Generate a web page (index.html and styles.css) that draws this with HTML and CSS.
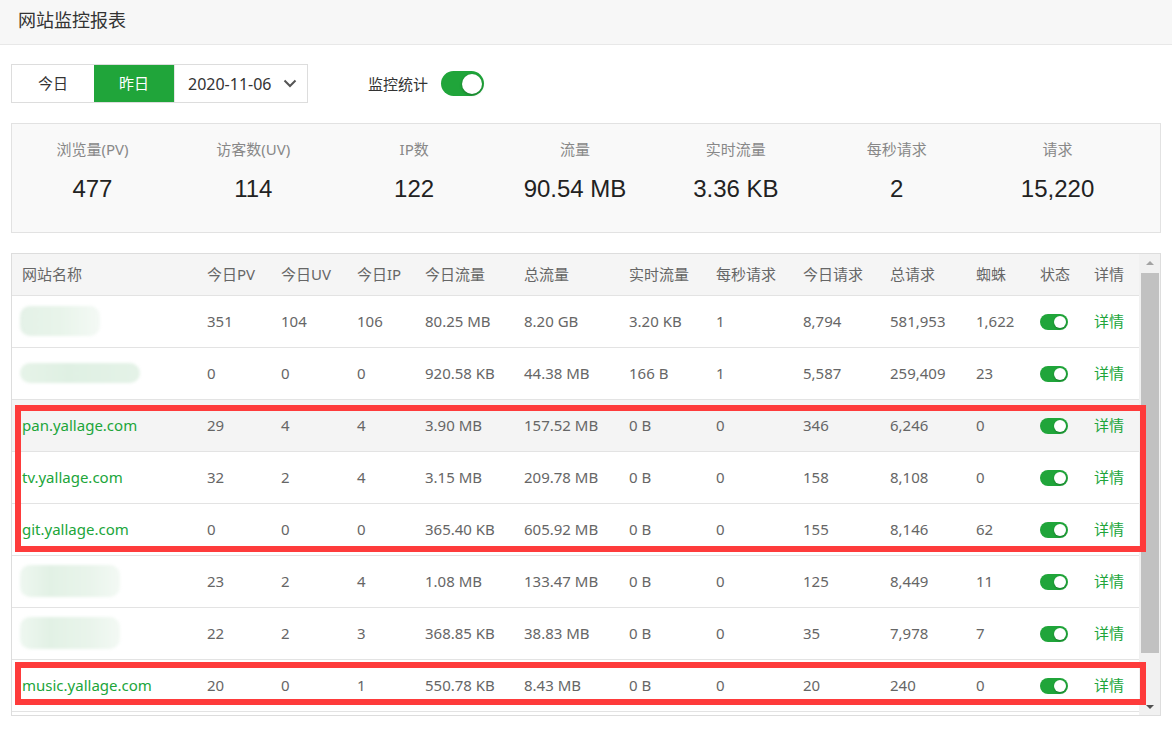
FILE: index.html
```html
<!DOCTYPE html>
<html lang="zh-CN">
<head>
<meta charset="utf-8">
<title>网站监控报表</title>
<link rel="stylesheet" href="styles.css">
</head>
<body>
<div class="page">
  <div class="header">网站监控报表</div>

  <div class="toolbar">
    <div class="seg">
      <div class="seg-btn">今日</div>
      <div class="seg-btn active">昨日</div>
      <div class="date">
        <span>2020-11-06</span>
        <svg class="chev" width="14" height="9" viewBox="0 0 14 9"><path d="M1.5 1.5 L7 7 L12.5 1.5" fill="none" stroke="#555" stroke-width="2"/></svg>
      </div>
    </div>
    <span class="mon-label">监控统计</span>
    <span class="switch big"><span class="knob"></span></span>
  </div>

  <div class="stats">
    <div class="stat"><div class="st-label">浏览量(PV)</div><div class="st-val">477</div></div>
    <div class="stat"><div class="st-label">访客数(UV)</div><div class="st-val">114</div></div>
    <div class="stat"><div class="st-label">IP数</div><div class="st-val">122</div></div>
    <div class="stat"><div class="st-label">流量</div><div class="st-val">90.54 MB</div></div>
    <div class="stat"><div class="st-label">实时流量</div><div class="st-val">3.36 KB</div></div>
    <div class="stat"><div class="st-label">每秒请求</div><div class="st-val">2</div></div>
    <div class="stat"><div class="st-label">请求</div><div class="st-val">15,220</div></div>
  </div>

  <div class="tbox">
    <div class="tscroll">
      <table class="grid">
        <colgroup>
          <col class="c1"><col class="c2"><col class="c3"><col class="c4"><col class="c5"><col class="c6"><col class="c7"><col class="c8"><col class="c9"><col class="c10"><col class="c11"><col class="c12"><col class="c13">
        </colgroup>
        <thead>
          <tr><th>网站名称</th><th>今日PV</th><th>今日UV</th><th>今日IP</th><th>今日流量</th><th>总流量</th><th>实时流量</th><th>每秒请求</th><th>今日请求</th><th>总请求</th><th>蜘蛛</th><th>状态</th><th>详情</th></tr>
        </thead>
        <tbody>
          <tr><td><span class="blur b1"></span></td><td>351</td><td>104</td><td>106</td><td>80.25 MB</td><td>8.20 GB</td><td>3.20 KB</td><td>1</td><td>8,794</td><td>581,953</td><td>1,622</td><td><span class="switch"><span class="knob"></span></span></td><td><a class="lnk">详情</a></td></tr>
          <tr><td><span class="blur b2"></span></td><td>0</td><td>0</td><td>0</td><td>920.58 KB</td><td>44.38 MB</td><td>166 B</td><td>1</td><td>5,587</td><td>259,409</td><td>23</td><td><span class="switch"><span class="knob"></span></span></td><td><a class="lnk">详情</a></td></tr>
          <tr class="hover"><td><a class="lnk">pan.yallage.com</a></td><td>29</td><td>4</td><td>4</td><td>3.90 MB</td><td>157.52 MB</td><td>0 B</td><td>0</td><td>346</td><td>6,246</td><td>0</td><td><span class="switch"><span class="knob"></span></span></td><td><a class="lnk">详情</a></td></tr>
          <tr><td><a class="lnk">tv.yallage.com</a></td><td>32</td><td>2</td><td>4</td><td>3.15 MB</td><td>209.78 MB</td><td>0 B</td><td>0</td><td>158</td><td>8,108</td><td>0</td><td><span class="switch"><span class="knob"></span></span></td><td><a class="lnk">详情</a></td></tr>
          <tr><td><a class="lnk">git.yallage.com</a></td><td>0</td><td>0</td><td>0</td><td>365.40 KB</td><td>605.92 MB</td><td>0 B</td><td>0</td><td>155</td><td>8,146</td><td>62</td><td><span class="switch"><span class="knob"></span></span></td><td><a class="lnk">详情</a></td></tr>
          <tr><td><span class="blur b3"></span></td><td>23</td><td>2</td><td>4</td><td>1.08 MB</td><td>133.47 MB</td><td>0 B</td><td>0</td><td>125</td><td>8,449</td><td>11</td><td><span class="switch"><span class="knob"></span></span></td><td><a class="lnk">详情</a></td></tr>
          <tr><td><span class="blur b3"></span></td><td>22</td><td>2</td><td>3</td><td>368.85 KB</td><td>38.83 MB</td><td>0 B</td><td>0</td><td>35</td><td>7,978</td><td>7</td><td><span class="switch"><span class="knob"></span></span></td><td><a class="lnk">详情</a></td></tr>
          <tr><td><a class="lnk">music.yallage.com</a></td><td>20</td><td>0</td><td>1</td><td>550.78 KB</td><td>8.43 MB</td><td>0 B</td><td>0</td><td>20</td><td>240</td><td>0</td><td><span class="switch"><span class="knob"></span></span></td><td><a class="lnk">详情</a></td></tr>
        </tbody>
      </table>
    </div>
    <div class="sbar">
      <div class="sb-btn"><span class="tri up"></span></div>
      <div class="sb-track"><div class="sb-thumb"></div></div>
      <div class="sb-btn"><span class="tri down"></span></div>
    </div>
    <div class="mark m1"></div>
    <div class="mark m2"></div>
  </div>
</div>
</body>
</html>
```
FILE: styles.css
```css
html, body {
  margin: 0;
  padding: 0;
  background: #fff;
}
body {
  font-family: "Noto Sans", "Noto Sans CJK SC", sans-serif;
  font-size: 15px;
  color: #333;
}
.page {
  width: 1172px;
}
.header {
  height: 44px;
  line-height: 41px;
  padding-left: 18px;
  font-size: 18px;
  color: #333;
  background: #f7f7f7;
  border-bottom: 1px solid #e8e8e8;
}
.toolbar {
  display: flex;
  align-items: center;
  margin: 19px 0 0 11px;
  height: 39px;
}
.seg {
  display: flex;
  height: 37px;
  border: 1px solid #ddd;
}
.seg-btn {
  width: 82px;
  line-height: 37px;
  text-align: center;
  color: #333;
  background: #fff;
}
.seg-btn.active {
  width: 80px;
  background: #20a53a;
  color: #fff;
}
.date {
  width: 133px;
  box-sizing: border-box;
  padding: 0 10px 0 13px;
  display: flex;
  align-items: center;
  justify-content: space-between;
  color: #333;
  font-size: 16px;
  border-left: 1px solid #e5e5e5;
}
.chev {
  display: block;
}
.mon-label {
  margin-left: 60px;
  color: #333;
}
.switch {
  display: inline-block;
  position: relative;
  width: 28px;
  height: 16px;
  border-radius: 8px;
  background: #20a53a;
  vertical-align: middle;
}
.switch .knob {
  position: absolute;
  right: 2px;
  top: 2px;
  width: 12px;
  height: 12px;
  border-radius: 50%;
  background: #fff;
  box-shadow: 0 1px 2px rgba(0,0,0,0.25);
}
.switch.big {
  width: 43px;
  height: 25px;
  border-radius: 13px;
  margin-left: 13px;
}
.switch.big .knob {
  width: 20px;
  height: 20px;
  top: 2.5px;
  right: 2px;
  box-shadow: 0 1px 3px rgba(0,0,0,0.3);
}
.stats {
  margin: 20px 11px 0 11px;
  height: 108px;
  border: 1px solid #e2e2e2;
  background: #f9f9f9;
  display: grid;
  grid-template-columns: repeat(7, 1fr);
  padding: 0 22px 0 0;
}
.stat {
  text-align: center;
  padding-top: 15px;
}
.st-label {
  line-height: 20px;
  color: #888;
  font-size: 15px;
}
.st-val {
  margin-top: 15px;
  line-height: 30px;
  font-family: "Liberation Sans", Arial, sans-serif;
  font-size: 24px;
  color: #222;
}
.tbox {
  position: relative;
  margin: 20px 11px 0 11px;
  height: 461px;
  border: 1px solid #ddd;
  display: flex;
}
.tscroll {
  flex: 1;
  overflow: hidden;
}
.grid {
  width: 1127px;
  table-layout: fixed;
  border-collapse: collapse;
  color: #666;
  font-size: 15px;
}
.c1 { width: 185px; }
.c2 { width: 74px; }
.c3 { width: 76px; }
.c4 { width: 68px; }
.c5 { width: 99px; }
.c6 { width: 105px; }
.c7 { width: 87px; }
.c8 { width: 87px; }
.c9 { width: 87px; }
.c10 { width: 86px; }
.c11 { width: 64px; }
.c12 { width: 54px; }
.c13 { width: 55px; }
.grid th {
  height: 39px;
  padding: 0 0 2px 10px;
  text-align: left;
  font-weight: normal;
  color: #666;
  background: #f5f5f5;
  border-bottom: 1px solid #e3e3e3;
  white-space: nowrap;
}
.grid td {
  height: 49px;
  padding: 0 0 2px 10px;
  border-bottom: 1px solid #e3e3e3;
  white-space: nowrap;
  vertical-align: middle;
}
.grid tr.hover td {
  background: #f4f4f4;
}
.lnk {
  color: #20a53a;
  text-decoration: none;
}
.blur {
  display: block;
  margin-left: -2px;
  border-radius: 10px;
  filter: blur(1.5px);
}
.b1 {
  width: 80px;
  height: 30px;
  background: linear-gradient(90deg, #e4f1e7 0%, #e8f4ea 50%, #f4f9f5 100%);
}
.b2 {
  width: 120px;
  height: 20px;
  background: linear-gradient(90deg, #e6f3e8 0%, #dff0e3 40%, #e4f2e7 100%);
}
.b3 {
  width: 100px;
  height: 32px;
  background: linear-gradient(90deg, #eef7f0 0%, #e2f1e5 30%, #e9f4eb 70%, #f3f9f4 100%);
}
.sbar {
  width: 21px;
  background: #f1f1f1;
  display: flex;
  flex-direction: column;
}
.sb-btn {
  height: 17px;
  display: flex;
  align-items: center;
  justify-content: center;
}
.sb-track {
  flex: 1;
  padding: 2px 1px 0 2px;
}
.sb-thumb {
  height: 380px;
  background: #c1c1c1;
}
.tri {
  width: 0;
  height: 0;
  border-left: 4px solid transparent;
  border-right: 4px solid transparent;
}
.tri.up {
  border-bottom: 4px solid #a3a3a3;
}
.tri.down {
  border-top: 4px solid #505050;
}
.mark {
  position: absolute;
  border: 6px solid #fe3b3b;
  box-sizing: border-box;
  pointer-events: none;
}
.m1 {
  left: 3px;
  top: 151px;
  width: 1131px;
  height: 147px;
}
.m2 {
  left: 3px;
  top: 408px;
  width: 1131px;
  height: 43px;
}
```
